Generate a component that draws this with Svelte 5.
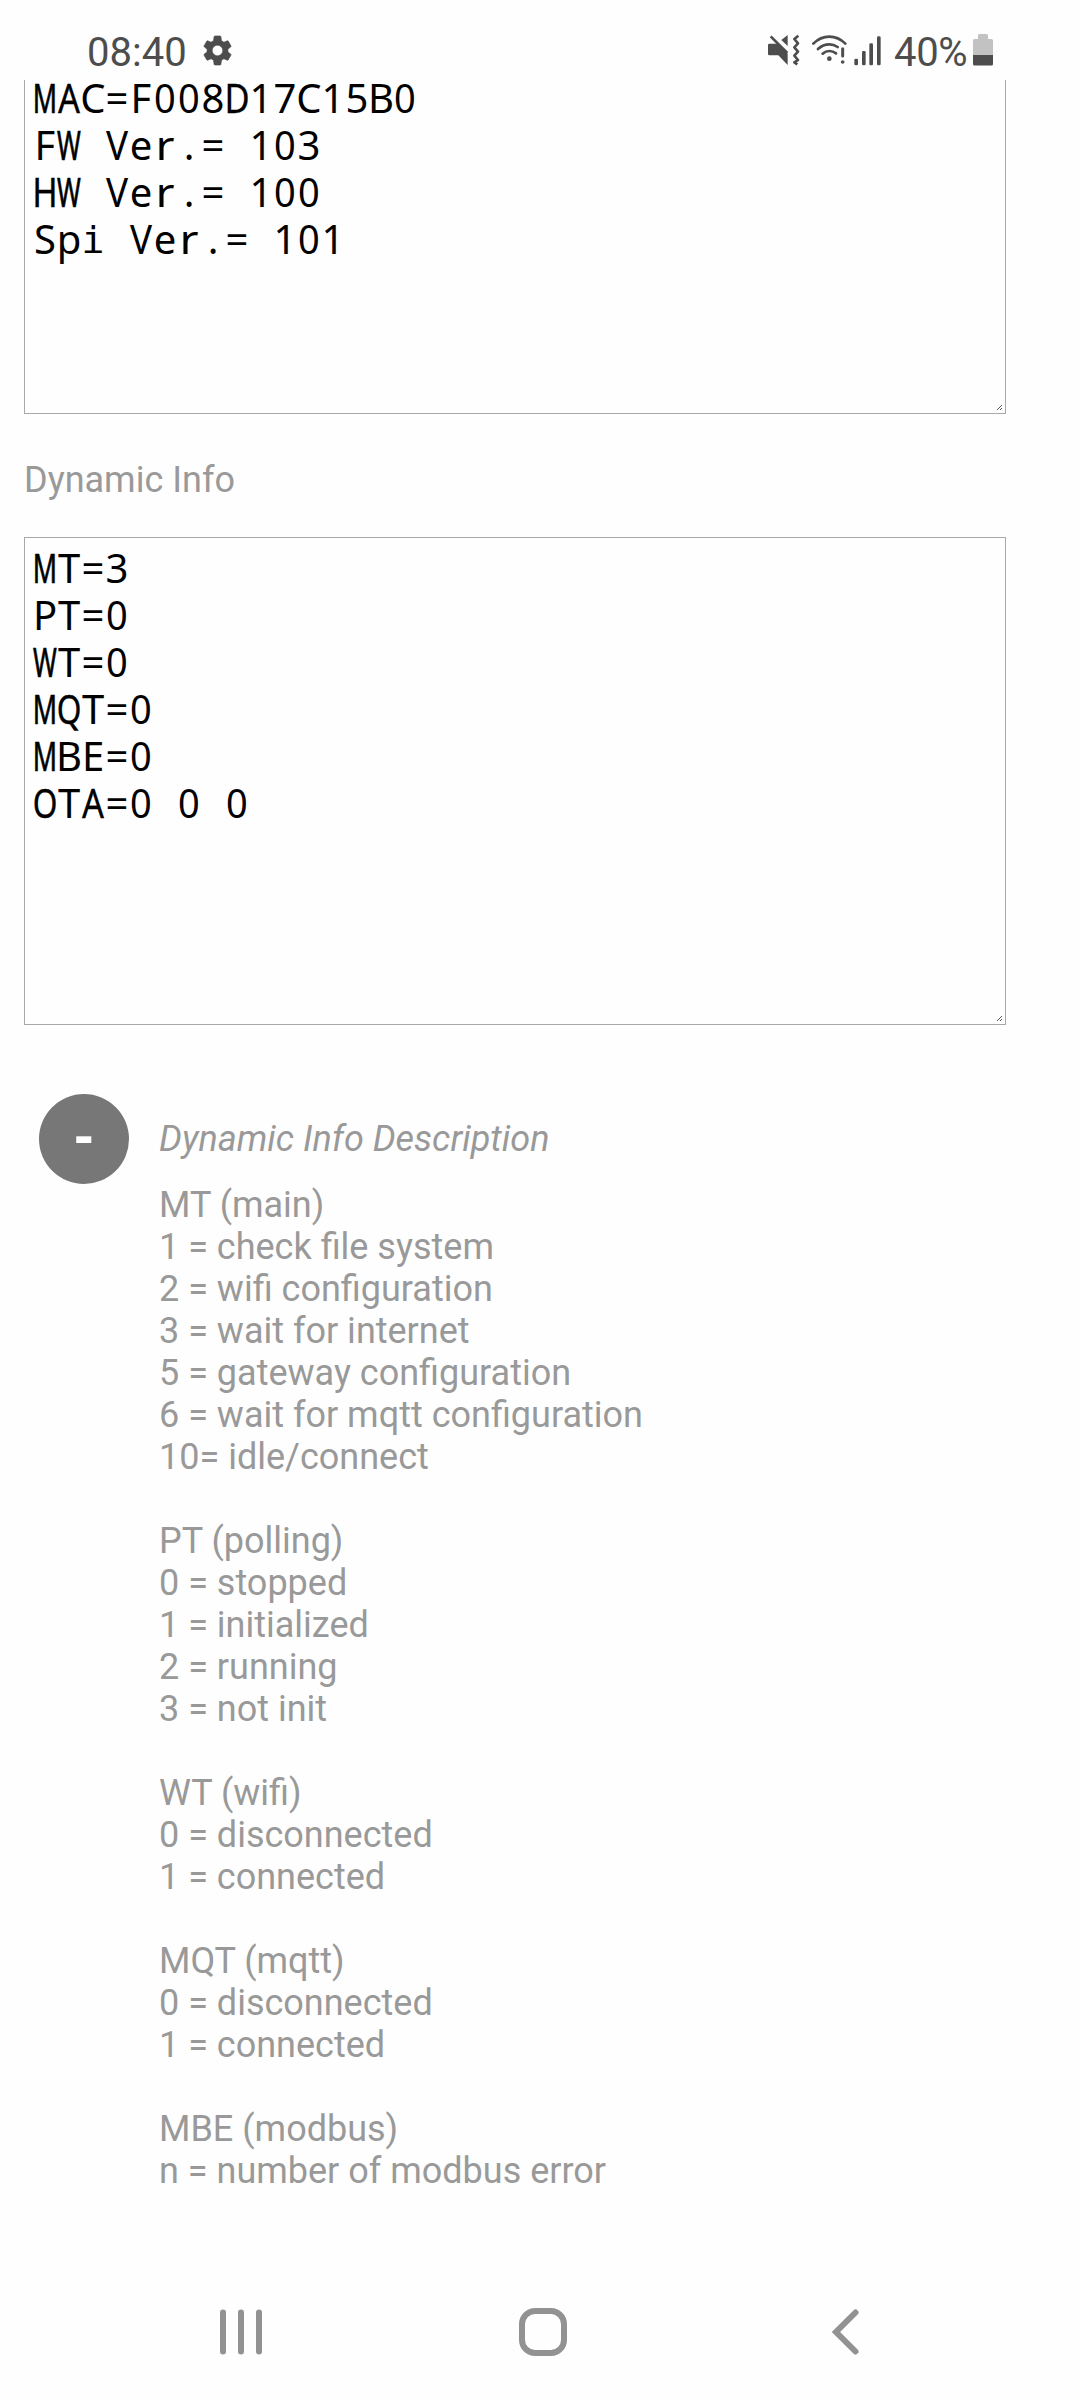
<script>
  const staticInfo = ['MAC=F008D17C15B0', 'FW Ver.= 103', 'HW Ver.= 100', 'Spi Ver.= 101'];
  const dynamicInfo = ['MT=3', 'PT=0', 'WT=0', 'MQT=0', 'MBE=0', 'OTA=0 0 0'];

  const description = [
    ['MT (main)', '1 = check file system', '2 = wifi configuration', '3 = wait for internet', '5 = gateway configuration', '6 = wait for mqtt configuration', '10= idle/connect'],
    ['PT (polling)', '0 = stopped', '1 = initialized', '2 = running', '3 = not init'],
    ['WT (wifi)', '0 = disconnected', '1 = connected'],
    ['MQT (mqtt)', '0 = disconnected', '1 = connected'],
    ['MBE (modbus)', 'n = number of modbus error']
  ];

  // Letters whose natural width is fitted to the fixed-pitch cell
  const fitted = {
    M: 'm', W: 'w', O: 'o', Q: 'o', A: 'a', H: 'a', D: 'a', V: 'v', '0': 'z', r: 'r', i: 'i'
  };
</script>

{#snippet mono(lines)}
  {#each lines as line}
    <div class="line">{#each line.split('') as ch}<span class="cell {fitted[ch] ?? ''}">{ch}</span>{/each}</div>
  {/each}
{/snippet}

{#snippet grip()}
  <svg class="grip" width="5" height="5" viewBox="0 0 5 5" shape-rendering="crispEdges" aria-hidden="true">
    <path d="M0 4h1v1H0zM1 3h1v1H1zM2 2h1v1H2zM3 1h1v1H3zM4 0h1v1H4zM3 4h1v1H3zM4 3h1v1H4z" />
  </svg>
{/snippet}

<div class="screen">
  <header class="status">
    <span class="clock">08:40</span>
    <svg class="gear" width="35" height="35" viewBox="0 0 24 24" aria-hidden="true">
      <path d="M19.14 12.94c.04-.3.06-.61.06-.94 0-.32-.02-.64-.07-.94l2.03-1.58c.18-.14.23-.41.12-.61l-1.92-3.32c-.12-.22-.37-.29-.59-.22l-2.39.96c-.5-.38-1.03-.7-1.62-.94L14.4 2.81c-.04-.24-.24-.81-.48-.81h-3.84c-.24 0-.43.57-.47.81L9.25 5.35C8.66 5.59 8.12 5.92 7.63 6.29L5.24 5.33c-.22-.08-.47 0-.59.22L2.74 8.87c-.12.21-.08.47.12.61l2.03 1.58c-.05.3-.09.63-.09.94s.02.64.07.94l-2.03 1.58c-.18.14-.23.41-.12.61l1.92 3.32c.12.22.37.29.59.22l2.39-.96c.5.38 1.03.7 1.62.94l.36 2.54c.05.24.24.81.48.81h3.84c.24 0 .44-.57.47-.81l.36-2.54c.59-.24 1.13-.56 1.62-.94l2.39.96c.22.08.47 0 .59-.22l1.92-3.32c.12-.22.07-.47-.12-.61l-2.01-1.58zM12 15.6c-1.98 0-3.6-1.62-3.6-3.6s1.62-3.6 3.6-3.6 3.6 1.62 3.6 3.6-1.62 3.6-3.6 3.6z" />
    </svg>
    <div class="indicators">
      <svg class="mute" width="32" height="32" viewBox="84 72 96 96" aria-hidden="true">
        <path d="M88 101h24l31 30v34l-28-29H88q-4 0-4-4v-27q0-4 4-4zM143 75v33l-19-18z" />
        <path class="stroke" d="M92 79l50 50" stroke-width="8" />
        <path class="stroke" d="M175 77l-12 10 11 13-11 12 11 13-11 12 11 13-11 7 9 6" stroke-width="8" stroke-linejoin="round" />
      </svg>
      <svg class="wifi" width="35" height="32" viewBox="215 72 105 96" aria-hidden="true">
        <path class="stroke" d="M219 101Q240 80 267 80T315 101M233 117Q248 103 267 103Q280 103 292 111M247 131Q256 123 267 123Q278 123 287 130" stroke-width="8" stroke-linecap="round" />
        <circle cx="267" cy="146" r="7" />
        <path class="stroke" d="M307 116v22" stroke-width="9" stroke-linecap="round" />
        <circle cx="307" cy="156" r="5.5" />
      </svg>
      <svg class="signal" width="27" height="32" viewBox="342 72 81 96" aria-hidden="true">
        <rect x="343" y="146" width="11" height="20" rx="4" />
        <rect x="366" y="123" width="11" height="43" rx="4" />
        <rect x="388" y="100" width="11" height="66" rx="4" />
        <rect x="411" y="79" width="11" height="87" rx="4" />
      </svg>
      <span class="percent">40%</span>
      <svg class="battery" width="20" height="32" viewBox="0 0 20 32" aria-hidden="true">
        <path class="empty" d="M5 1.5Q5 0 6.5 0h7Q15 0 15 1.5V5h3.5Q20 5 20 6.500V21H0V6.500Q0 5 1.500 5H5z" />
        <path d="M0 21h20v9q0 1.500-1.500 1.500h-17Q0 31.500 0 30z" />
      </svg>
    </div>
  </header>

  <main>
    <section class="box scrolled">
      <div class="shifted">{@render mono(staticInfo)}</div>
      {@render grip()}
    </section>

    <p class="label">Dynamic Info</p>

    <section class="box full">
      {@render mono(dynamicInfo)}
      {@render grip()}
    </section>

    <section class="details">
      <button class="toggle" aria-label="Collapse"><span>-</span></button>
      <div class="text">
        <p class="title">Dynamic Info Description</p>
        {#each description as group}
          <div class="group">
            {#each group as row}<p>{row}</p>{/each}
          </div>
        {/each}
      </div>
    </section>
  </main>

  <nav>
    <svg width="44" height="48" viewBox="0 0 44 48" aria-hidden="true">
      <path d="M4 4.500v39M22 4.500v39M40 4.500v39" />
    </svg>
    <svg width="50" height="50" viewBox="0 0 50 50" aria-hidden="true">
      <rect x="4" y="4" width="42" height="42" rx="13" />
    </svg>
    <svg width="30" height="48" viewBox="0 0 30 48" aria-hidden="true">
      <path d="M25.500 4.500L6 24l19.500 19.500" />
    </svg>
  </nav>
</div>

<style>
  :global(body) {
    margin: 0;
    background: #fefefe;
  }
  .screen {
    width: 1080px;
    height: 2400px;
    display: flex;
    flex-direction: column;
    background: #fefefe;
    font-family: Roboto, sans-serif;
    color: #999;
    overflow: hidden;
  }
  p {
    margin: 0;
  }
  .status {
    height: 80px;
    flex: none;
    box-sizing: border-box;
    padding: 28px 87px 0 87px;
    display: flex;
    align-items: flex-start;
    color: #4d4d4d;
    fill: #4d4d4d;
    font-size: 40px;
    line-height: 50px;
  }
  .status svg {
    display: block;
  }
  .clock {
    width: 113px;
  }
  .gear {
    margin-top: 5px;
    stroke: #4d4d4d;
    stroke-width: 0.4;
  }
  .indicators {
    margin-left: auto;
    display: flex;
  }
  .indicators svg {
    margin-top: 6px;
  }
  .stroke {
    fill: none;
    stroke: #4d4d4d;
  }
  .wifi {
    margin-left: 12px;
  }
  .signal {
    margin-left: 7px;
  }
  .percent {
    width: 79px;
    margin-left: 13px;
    letter-spacing: -0.3px;
  }
  .empty {
    fill: #c2c2c2;
  }
  main {
    flex: 1;
    padding-left: 24px;
  }
  .box {
    position: relative;
    width: 982px;
    box-sizing: border-box;
    border: 1px solid #a9a9a9;
    color: #000;
    font: 40px/47px 'Noto Sans', sans-serif;
  }
  .scrolled {
    height: 334px;
    border-top: 0;
    padding-left: 8px;
    display: flow-root;
  }
  .shifted {
    margin-top: -6px;
  }
  .full {
    height: 488px;
    padding: 6px 0 0 8px;
  }
  .line {
    height: 47px;
    white-space: pre;
  }
  .cell {
    display: inline-flex;
    justify-content: center;
    width: 24px;
    height: 47px;
    vertical-align: top;
    white-space: pre;
  }
  .m {
    transform: scaleX(0.67);
    -webkit-text-stroke: 0.7px #000;
  }
  .w {
    transform: scaleX(0.64);
    -webkit-text-stroke: 0.7px #000;
  }
  .o {
    transform: scaleX(0.79);
    -webkit-text-stroke: 0.4px #000;
  }
  .a {
    transform: scaleX(0.86);
    -webkit-text-stroke: 0.3px #000;
  }
  .v {
    transform: scaleX(0.92);
  }
  .z {
    transform: scaleX(0.95);
  }
  .r {
    transform: scaleX(1.15);
  }
  .i {
    font-family: 'DejaVu Sans Mono', monospace;
    font-size: 38px;
    line-height: 51px;
  }
  .grip {
    position: absolute;
    right: 3px;
    bottom: 3px;
    fill: #555;
  }
  .label {
    padding: 45px 0 36px;
    font-size: 36px;
    line-height: 42px;
  }
  .details {
    display: flex;
    padding: 69px 0 0 15px;
    font-size: 36px;
    line-height: 42px;
  }
  .toggle {
    width: 90px;
    height: 90px;
    flex: none;
    padding: 0;
    border: 0;
    border-radius: 50%;
    background: #777;
    color: #fff;
    font: 900 51px/90px Roboto, sans-serif;
  }
  .text {
    margin-left: 30px;
  }
  .title {
    padding: 24px 0;
    font-style: italic;
  }
  .group {
    margin-bottom: 42px;
  }
  nav {
    height: 136px;
    flex: none;
    box-sizing: border-box;
    padding: 0 220px 0 219px;
    display: flex;
    justify-content: space-between;
    align-items: center;
  }
  nav svg:nth-child(2) {
    margin-right: 7px;
  }
  nav svg {
    fill: none;
    stroke: #929292;
    stroke-width: 6;
    stroke-linecap: round;
  }
</style>
